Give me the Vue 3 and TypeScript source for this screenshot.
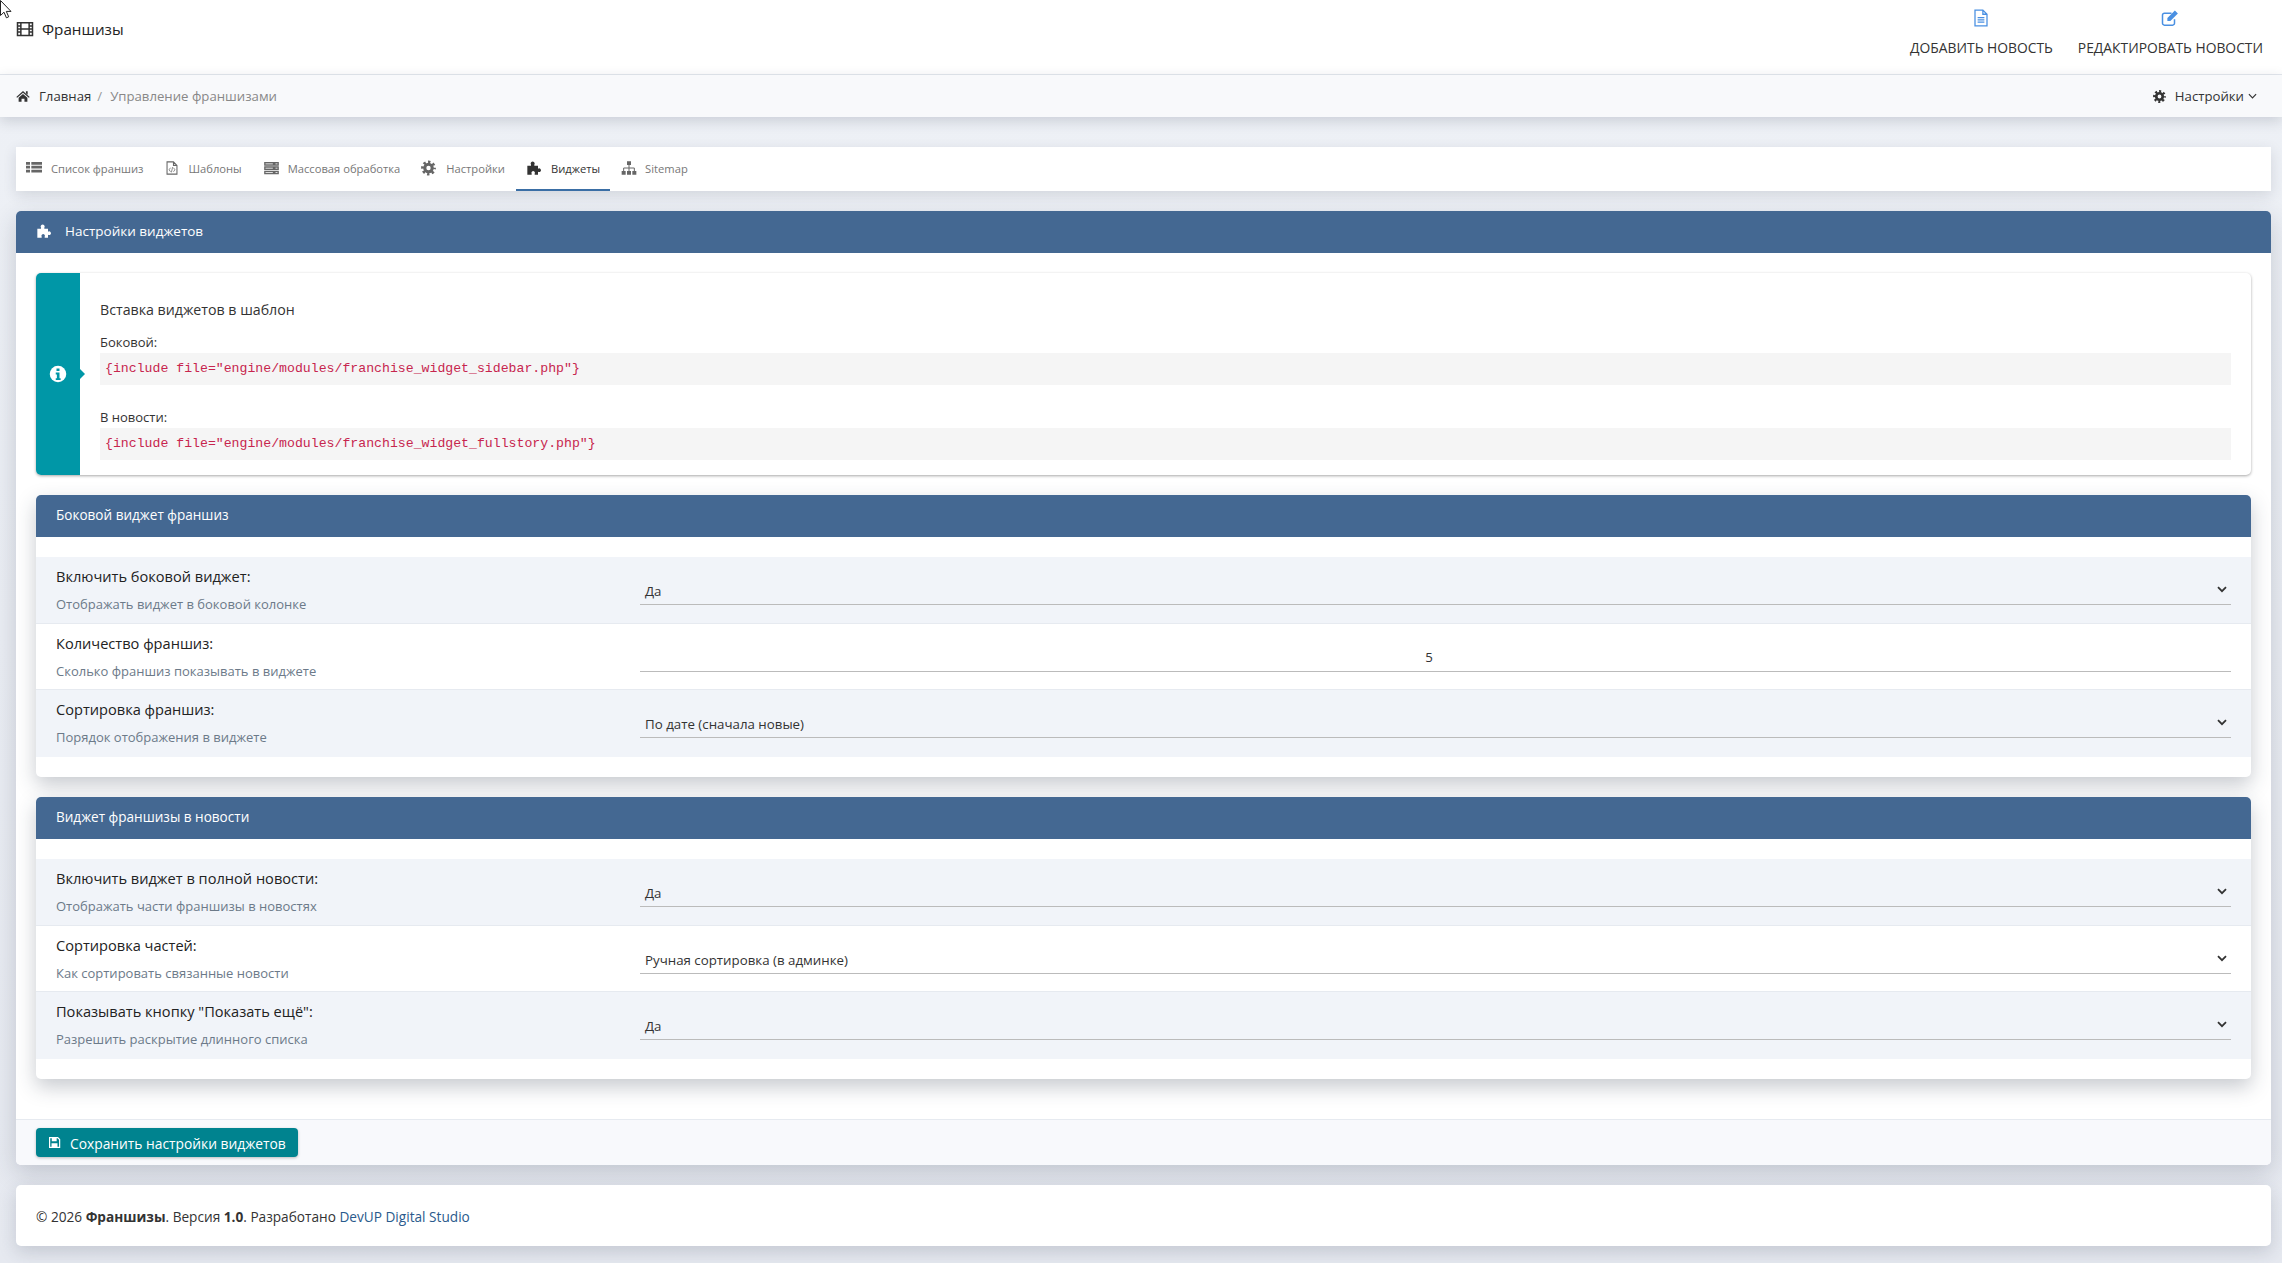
<script setup lang="ts">
interface Row { label: string; desc: string; value: string; kind?: 'number' }
interface Section { title: string; rows: Row[] }

const tabs = [
  { icon: 'i-list', text: 'Список франшиз', iw: 16, gap: 9 },
  { icon: 'i-code', text: 'Шаблоны', iw: 14, gap: 10 },
  { icon: 'i-server', text: 'Массовая обработка', iw: 17, gap: 8 },
  { icon: 'i-cog', text: 'Настройки', iw: 15, gap: 10 },
  { icon: 'i-puzzle', text: 'Виджеты', iw: 16, gap: 9, active: true },
  { icon: 'i-sitemap', text: 'Sitemap', iw: 16, gap: 8 },
]

const sections: Section[] = [
  {
    title: 'Боковой виджет франшиз',
    rows: [
      { label: 'Включить боковой виджет:', desc: 'Отображать виджет в боковой колонке', value: 'Да' },
      { label: 'Количество франшиз:', desc: 'Сколько франшиз показывать в виджете', value: '5', kind: 'number' },
      { label: 'Сортировка франшиз:', desc: 'Порядок отображения в виджете', value: 'По дате (сначала новые)' },
    ],
  },
  {
    title: 'Виджет франшизы в новости',
    rows: [
      { label: 'Включить виджет в полной новости:', desc: 'Отображать части франшизы в новостях', value: 'Да' },
      { label: 'Сортировка частей:', desc: 'Как сортировать связанные новости', value: 'Ручная сортировка (в админке)' },
      { label: 'Показывать кнопку "Показать ещё":', desc: 'Разрешить раскрытие длинного списка', value: 'Да' },
    ],
  },
]
</script>

<template>
  <svg class="defs" aria-hidden="true">
    <symbol id="i-film" viewBox="0 0 24 24"><path d="M2 3.500h20v17H2zM6.500 3.500v17M17.500 3.500v17M2 8h4.500M2 12h4.500M2 16h4.500M17.500 8H22M17.500 12H22M17.500 16H22M6.500 12h11" fill="none" stroke="currentColor" stroke-width="2"/></symbol>
    <symbol id="i-home" viewBox="0 0 24 24"><path d="M12 3.500 23.500 13.500 22 15.200 12 6.600 2 15.200.5 13.500zM17 4h3v6l-3-2.600zM4.500 15 12 8.500l7.500 6.500v7H14.500v-5.500h-5V22H4.500z" fill="currentColor"/></symbol>
    <symbol id="i-cog" viewBox="0 0 24 24"><circle cx="12" cy="12" r="6" fill="none" stroke="currentColor" stroke-width="5"/><circle cx="12" cy="12" r="9.600" fill="none" stroke="currentColor" stroke-width="4.500" stroke-dasharray="3.770 3.770" stroke-dashoffset="1.880"/></symbol>
    <symbol id="i-list" viewBox="0 0 24 24"><path d="M0 3h6v4H0zM8 3h16v4H8zM0 8.800h6v4H0zM8 8.800h16v4H8zM0 14.600h6v4H0zM8 14.600h16v4H8z" fill="currentColor"/></symbol>
    <symbol id="i-code" viewBox="0 0 24 24"><path d="M14.500 1.500H3.500v21h17V7.500zM14.500 1.500v6h6" fill="none" stroke="currentColor" stroke-width="1.800"/><path d="M9.500 11.500 7 15l2.500 3.500M14.500 11.500 17 15l-2.500 3.500M13 10.500l-2 9" fill="none" stroke="currentColor" stroke-width="1.300"/></symbol>
    <symbol id="i-server" viewBox="0 0 24 24"><path d="M1 3h22v5.500H1zM1 9.500h22v5.500H1zM1 16h22v5.500H1z" fill="currentColor"/><path d="M3 5.800h11M3 12.300h11M3 18.800h11" stroke="#fff" stroke-width="1.200"/><path d="M18 5.800h3M18 12.300h3M18 18.800h3" stroke="#fff" stroke-width="1.200"/></symbol>
    <symbol id="i-puzzle" viewBox="0 0 24 24"><path d="M2 8.500h5.500V7a3 3 0 1 1 5 0v1.500H18V13a2.800 2.800 0 1 1 0 4.500V22h-5v-1.500a2.600 2.600 0 1 0-4.500 0V22H2z" fill="currentColor"/></symbol>
    <symbol id="i-sitemap" viewBox="0 0 24 24"><path d="M9 2h6v5.500H9zM1 16.500h6V22H1zM9 16.500h6V22H9zM17 16.500h6V22h-6z" fill="currentColor"/><path d="M12 7.500v9M4 16.500V12h16v4.500" fill="none" stroke="currentColor" stroke-width="1.500"/></symbol>
    <symbol id="i-file" viewBox="0 0 24 24"><path d="M14.500 1.500H4v21h16V7zM14.500 1.500V7H20" fill="none" stroke="currentColor" stroke-width="1.700"/><path d="M7.500 11.500h9M7.500 14.500h9M7.500 17.500h9" stroke="currentColor" stroke-width="1.500"/></symbol>
    <symbol id="i-edit" viewBox="0 0 24 24"><path d="M18 13.500V19a2.500 2.500 0 0 1-2.500 2.500H4.500A2.500 2.500 0 0 1 2 19V8a2.500 2.500 0 0 1 2.500-2.500H14" fill="none" stroke="currentColor" stroke-width="2"/><path d="M8.500 12 18.500 2l4 4-10 10h-4zM18.500 2" fill="currentColor"/></symbol>
    <symbol id="i-save" viewBox="0 0 24 24"><path d="M3 3h15l3.500 3.500V21H3z" fill="none" stroke="currentColor" stroke-width="2.200"/><path d="M7 3h9v6.500H7zM6.500 13.500h11V21h-11z" fill="currentColor"/></symbol>
  </svg>

  <div class="page">
    <svg class="cursor" width="12" height="19" viewBox="0 0 12 19" aria-hidden="true"><path d="M.5.500v15l3.500-3.300 2.400 5.600 2.300-1-2.400-5.400h4.700z" fill="#fff" stroke="#222" stroke-width="1"/></svg>

    <header class="topbar">
      <div class="brand">
        <svg class="ico brand-ico"><use href="#i-film" /></svg>
        <span>Франшизы</span>
      </div>
      <nav class="actions">
        <a class="action"><svg class="ico action-ico"><use href="#i-file" /></svg><span>ДОБАВИТЬ НОВОСТЬ</span></a>
        <a class="action"><svg class="ico action-ico"><use href="#i-edit" /></svg><span>РЕДАКТИРОВАТЬ НОВОСТИ</span></a>
      </nav>
    </header>

    <div class="crumbs">
      <div class="crumb-path">
        <svg class="ico crumb-home"><use href="#i-home" /></svg>
        <span class="crumb-link">Главная</span>
        <span class="crumb-sep">/</span>
        <span class="crumb-now">Управление франшизами</span>
      </div>
      <div class="crumb-menu">
        <svg class="ico crumb-cog"><use href="#i-cog" /></svg>
        <span>Настройки</span>
        <svg class="crumb-chev" viewBox="0 0 10 6"><path d="M1 1l4 4 4-4" fill="none" stroke="currentColor" stroke-width="1.300"/></svg>
      </div>
    </div>

    <main class="content">
      <div class="tabs">
        <div v-for="t in tabs" :key="t.text" class="tab" :class="{ active: t.active }">
          <svg class="ico tab-ico" :style="{ marginRight: t.gap + 'px', width: t.iw + 'px' }"><use :href="'#' + t.icon" /></svg>
          <span>{{ t.text }}</span>
        </div>
      </div>

      <section class="panel">
        <div class="panel-head">
          <svg class="ico panel-ico"><use href="#i-puzzle" /></svg>
          <span>Настройки виджетов</span>
        </div>
        <div class="panel-body">
          <div class="alert">
            <div class="alert-side">
              <svg class="alert-ico" viewBox="0 0 24 24"><circle cx="12" cy="12" r="11" fill="#fff"/><path d="M10 4.500h4v3.500h-4zM9 10h5v7.500h1.500V20h-6.500v-2.500h1.500V12.500H9z" fill="#0097a7"/></svg>
            </div>
            <div class="alert-main">
              <p class="alert-title">Вставка виджетов в шаблон</p>
              <p class="code-label">Боковой:</p>
              <pre class="code">{include file="engine/modules/franchise_widget_sidebar.php"}</pre>
              <p class="code-label second">В новости:</p>
              <pre class="code">{include file="engine/modules/franchise_widget_fullstory.php"}</pre>
            </div>
          </div>

          <div v-for="s in sections" :key="s.title" class="card">
            <div class="card-head">{{ s.title }}</div>
            <div class="rows">
              <div v-for="r in s.rows" :key="r.label" class="row">
                <div class="row-text">
                  <div class="row-label">{{ r.label }}</div>
                  <div class="row-desc">{{ r.desc }}</div>
                </div>
                <div class="control" :class="{ number: r.kind === 'number' }">
                  <span>{{ r.value }}</span>
                  <svg v-if="r.kind !== 'number'" class="chev" viewBox="0 0 10 7"><path d="M1 1.200l4 4 4-4" fill="none" stroke="currentColor" stroke-width="1.800"/></svg>
                </div>
              </div>
            </div>
          </div>
        </div>
        <div class="panel-foot">
          <button class="save" type="button">
            <svg class="ico save-ico"><use href="#i-save" /></svg>
            <span class="save-text">Сохранить настройки виджетов</span>
          </button>
        </div>
      </section>

      <footer class="copy">
        © 2026 <b>Франшизы</b>. Версия <b>1.0</b>. Разработано <a>DevUP Digital Studio</a>
      </footer>
    </main>
  </div>
</template>

<style>
html, body { margin: 0; background: #eef1f6; }
</style>

<style scoped>
.defs { position: absolute; width: 0; height: 0; }
.page {
  position: relative;
  height: 1263px;
  overflow: hidden;
  background: linear-gradient(#eef1f6, #e6e9f0);
  font-family: "Open Sans", "Noto Sans", sans-serif;
  font-size: 13px;
  color: #333;
}
.cursor { position: absolute; left: 0; top: 0; z-index: 5; }
.ico { display: block; width: 16px; height: 16px; flex: none; }

.topbar {
  height: 74px;
  background: #fff;
  border-bottom: 1px solid #e4e8ee;
  display: flex;
  justify-content: space-between;
  padding: 0 19px 0 16px;
}
.brand { display: flex; align-items: center; height: 58px; font-size: 15.2px; font-weight: 500; color: #222; }
.brand-ico { width: 18px; height: 18px; margin-right: 8px; color: #333; }
.actions { display: flex; gap: 25px; }
.action {
  display: flex;
  flex-direction: column;
  align-items: center;
  padding-top: 9px;
  font-size: 13.85px;
  color: #333;
}
.action-ico { width: 18px; height: 18px; color: #4a90e2; margin-bottom: 11px; }

.crumbs {
  height: 42px;
  background: #f8f9fb;
  display: flex;
  justify-content: space-between;
  align-items: center;
  padding: 0 25px 0 16px;
  font-size: 13.2px;
  box-shadow: 0 4px 14px rgba(40, 50, 70, 0.18);
  position: relative;
}
.crumb-path, .crumb-menu { display: flex; align-items: center; }
.crumb-home { width: 14px; height: 14px; margin-right: 9px; }
.crumb-link { color: #333; }
.crumb-sep { color: #999; margin: 0 8px 0 6px; }
.crumb-now { color: #888; }
.crumb-cog { width: 13px; height: 13px; margin-right: 9px; }
.crumb-chev { width: 9px; height: 6px; margin-left: 4px; }

.content { padding: 30px 11px 16px 16px; }
.tabs {
  height: 44px;
  background: #fff;
  display: flex;
  box-shadow: 0 4px 14px rgba(40, 50, 70, 0.14);
}
.tab {
  display: flex;
  align-items: center;
  padding: 0 10px;
  margin-right: 1px;
  font-size: 11.2px;
  color: #777;
  border-bottom: 2px solid transparent;
}
.tab.active { color: #333; border-bottom-color: #3a6ea5; }
.tab-ico { height: 16px; color: #666; }
.tab.active .tab-ico { color: #333; }

.panel {
  margin-top: 20px;
  background: #fff;
  border-radius: 5px;
  box-shadow: 0 8px 24px rgba(40, 50, 70, 0.2);
  overflow: hidden;
}
.panel-head {
  height: 42px;
  background: #446892;
  color: #fff;
  display: flex;
  align-items: center;
  padding: 0 0 2px 20px;
  box-sizing: border-box;
  font-size: 13.5px;
}
.panel-ico { margin-right: 13px; }
.panel-body { padding: 20px 20px 40px; }

.alert {
  display: flex;
  height: 202px;
  border-radius: 5px;
  background: #fff;
  box-shadow: 0 1px 3px rgba(0, 0, 0, 0.35);
  margin-bottom: 20px;
  position: relative;
}
.alert-side {
  width: 44px;
  flex: none;
  background: #0097a7;
  border-radius: 5px 0 0 5px;
  display: flex;
  align-items: center;
  justify-content: center;
  position: relative;
}
.alert-side::after {
  content: "";
  position: absolute;
  right: -5px;
  top: 50%;
  margin-top: -5px;
  border-left: 5px solid #0097a7;
  border-top: 5px solid transparent;
  border-bottom: 5px solid transparent;
}
.alert-ico { width: 18px; height: 18px; }
.alert-main { flex: 1; padding: 27px 20px 0; min-width: 0; }
.alert-main p { margin: 0; }
.alert-title { height: 20px; line-height: 20px; font-size: 14.2px; }
.code-label { height: 20px; line-height: 20px; margin-top: 12px !important; font-size: 13px; }
.code-label.second { margin-top: 22px !important; }
.code {
  margin: 1px 0 0;
  height: 32px;
  line-height: 32px;
  padding: 0 5px;
  background: #f5f5f5;
  color: #c7254e;
  font-family: "Liberation Mono", monospace;
  font-size: 13.2px;
}

.card {
  border-radius: 5px;
  background: #fff;
  box-shadow: 0 8px 20px rgba(40, 50, 70, 0.26);
  margin-bottom: 20px;
  padding-bottom: 20px;
  overflow: hidden;
}
.card:last-child { margin-bottom: 0; }
.card-head {
  height: 42px;
  line-height: 40px;
  padding-left: 20px;
  background: #446892;
  color: #fff;
  font-size: 13.55px;
}
.rows { margin-top: 20px; }
.row {
  height: 67px;
  box-sizing: border-box;
  display: flex;
  padding: 0 20px;
  border-bottom: 1px solid #e6eaf0;
}
.row:nth-child(2) { height: 66px; }
.row:nth-child(odd) { background: #f1f4f9; }
.row:last-child { border-bottom: 0; }
.row-text { width: 584px; flex: none; padding-top: 8px; }
.row-label { font-size: 14.6px; font-weight: 500; line-height: 22px; color: #222; }
.row-desc { font-size: 13px; line-height: 18px; margin-top: 8px; color: #6c7a89; }
.control {
  flex: 1;
  height: 48px;
  box-sizing: border-box;
  border-bottom: 1px solid #bbb;
  display: flex;
  align-items: flex-end;
  justify-content: space-between;
  padding: 0 4px 3px 5px;
  line-height: 20px;
  font-size: 13.3px;
  color: #333;
}
.control.number { justify-content: center; padding: 0 18px 4px 5px; }
.chev { width: 10px; height: 7px; margin-bottom: 8px; color: #333; }

.panel-foot {
  height: 46px;
  box-sizing: border-box;
  background: #f8f9fc;
  border-top: 1px solid #e6eaf0;
  padding: 8px 20px 0;
}
.save {
  height: 29px;
  width: 262px;
  border: 0;
  border-radius: 4px;
  background: #00838f;
  color: #fff;
  font: inherit;
  font-size: 13.8px;
  white-space: nowrap;
  display: flex;
  align-items: center;
  padding: 0 12px;
  box-shadow: 0 1px 3px rgba(0, 0, 0, 0.25);
}
.save-text { padding-top: 1px; }
.save-ico { width: 13px; height: 13px; margin-right: 9px; }

.copy {
  margin-top: 20px;
  height: 61px;
  line-height: 63px;
  padding-left: 20px;
  font-size: 13.65px;
  background: #fff;
  border-radius: 5px;
  box-shadow: 0 6px 18px rgba(40, 50, 70, 0.18);
  color: #333;
}
.copy a { color: #2a5a8c; }
</style>
